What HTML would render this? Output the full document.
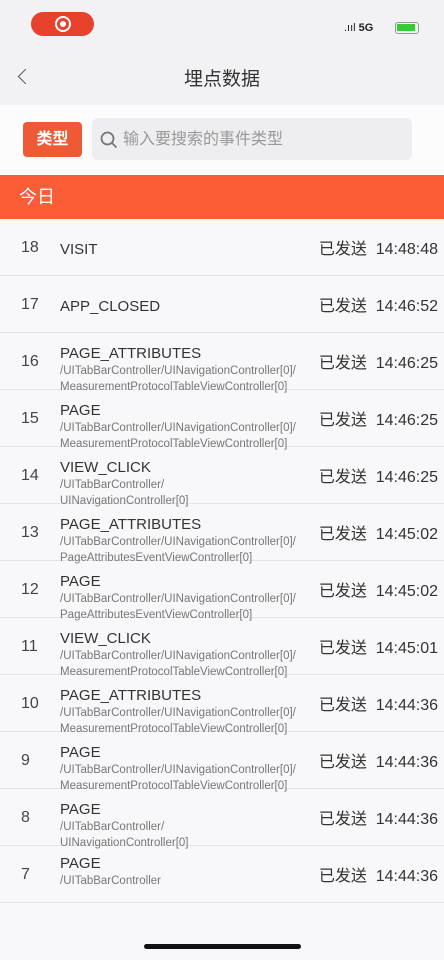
<!DOCTYPE html>
<html><head><meta charset="utf-8"><style>
*{margin:0;padding:0;box-sizing:border-box}
body{width:444px;height:960px;background:#f8f8fa;font-family:"Liberation Sans","Noto Sans CJK SC",sans-serif;position:relative;overflow:hidden;color:#333}
.top{position:absolute;left:0;top:0;width:444px;height:105px;background:#f2f2f5}
.rec{position:absolute;left:31px;top:12px;width:63px;height:24px;background:#e8412c;border-radius:12px}
.rec i{position:absolute;left:24px;top:4px;width:16px;height:16px;border:2px solid #fff;border-radius:50%}
.rec i:after{content:"";position:absolute;left:3px;top:3px;width:6px;height:6px;background:#fff;border-radius:50%}
.title{position:absolute;top:64px;width:444px;text-align:center;font-size:19px;color:#333}
.back{position:absolute;left:20px;top:71px;width:11px;height:11px;border-left:1.5px solid #555;border-bottom:1.5px solid #555;transform:rotate(45deg)}
.sbar{position:absolute;left:0;top:105px;width:444px;height:70px;background:#fcfcfd}
.type{position:absolute;left:23px;top:122px;width:59px;height:35px;background:#ef5a36;border-radius:4px;color:#fff;font-size:16px;font-weight:bold;text-align:center;line-height:35px}
.search{position:absolute;left:92px;top:118px;width:320px;height:42px;background:#eeeef1;border-radius:6px;color:#999;font-size:16px;line-height:44px;padding-left:31px}
.search svg{position:absolute;left:8px;top:13px}
.today{position:absolute;left:0;top:175px;width:444px;height:44px;background:#fb5d37;color:#fff;font-size:18px;line-height:44px;padding-left:19px}
.row{position:absolute;left:0;width:444px;height:57px;border-bottom:1px solid #e4e4e8}
.n{position:absolute;left:21px;width:30px;font-size:16px;color:#444;top:20px;line-height:18px}
.t{position:absolute;right:6px;font-size:16px;color:#333;top:21px;line-height:20px}
.c{position:absolute;left:60px;top:11px;width:250px}
.c.one{top:21px}
.c.two{top:8px}
.c b{display:block;font-weight:normal;font-size:15px;color:#333;line-height:19px}
.c s{display:block;text-decoration:none;font-size:11.5px;color:#777;line-height:16px}
.home{position:absolute;left:144px;top:944px;width:157px;height:5px;background:#111;border-radius:3px}
</style></head><body>
<div class="top"></div>
<div class="rec"><i></i></div>
<div style="position:absolute;left:344px;top:22px;font-size:11px;color:#222">.ııl <b>5G</b></div>
<div style="position:absolute;left:395px;top:22px;width:24px;height:12px;border:1.5px solid #999;border-radius:3px"><div style="margin:1px;width:18px;height:7px;background:#3c3"></div></div>
<div class="back"></div>
<div class="title">埋点数据</div>
<div class="sbar"></div>
<div class="type">类型</div>
<div class="search"><svg width="18" height="18" viewBox="0 0 18 18"><circle cx="7.5" cy="7.5" r="6" fill="none" stroke="#777" stroke-width="1.8"/><path d="M12 12l4.5 4.5" stroke="#777" stroke-width="1.8"/></svg>输入要搜索的事件类型</div>
<div class="today">今日</div>

<div class="row" style="top:219px"><span class="n">18</span><div class="c one"><b>VISIT</b></div><span class="t">已发送&nbsp; 14:48:48</span></div>
<div class="row" style="top:276px"><span class="n">17</span><div class="c one"><b>APP_CLOSED</b></div><span class="t">已发送&nbsp; 14:46:52</span></div>
<div class="row" style="top:333px"><span class="n">16</span><div class="c"><b>PAGE_ATTRIBUTES</b><s>/UITabBarController/UINavigationController[0]/</s><s>MeasurementProtocolTableViewController[0]</s></div><span class="t">已发送&nbsp; 14:46:25</span></div>
<div class="row" style="top:390px"><span class="n">15</span><div class="c"><b>PAGE</b><s>/UITabBarController/UINavigationController[0]/</s><s>MeasurementProtocolTableViewController[0]</s></div><span class="t">已发送&nbsp; 14:46:25</span></div>
<div class="row" style="top:447px"><span class="n">14</span><div class="c"><b>VIEW_CLICK</b><s>/UITabBarController/</s><s>UINavigationController[0]</s></div><span class="t">已发送&nbsp; 14:46:25</span></div>
<div class="row" style="top:504px"><span class="n">13</span><div class="c"><b>PAGE_ATTRIBUTES</b><s>/UITabBarController/UINavigationController[0]/</s><s>PageAttributesEventViewController[0]</s></div><span class="t">已发送&nbsp; 14:45:02</span></div>
<div class="row" style="top:561px"><span class="n">12</span><div class="c"><b>PAGE</b><s>/UITabBarController/UINavigationController[0]/</s><s>PageAttributesEventViewController[0]</s></div><span class="t">已发送&nbsp; 14:45:02</span></div>
<div class="row" style="top:618px"><span class="n">11</span><div class="c"><b>VIEW_CLICK</b><s>/UITabBarController/UINavigationController[0]/</s><s>MeasurementProtocolTableViewController[0]</s></div><span class="t">已发送&nbsp; 14:45:01</span></div>
<div class="row" style="top:675px"><span class="n">10</span><div class="c"><b>PAGE_ATTRIBUTES</b><s>/UITabBarController/UINavigationController[0]/</s><s>MeasurementProtocolTableViewController[0]</s></div><span class="t">已发送&nbsp; 14:44:36</span></div>
<div class="row" style="top:732px"><span class="n">9</span><div class="c"><b>PAGE</b><s>/UITabBarController/UINavigationController[0]/</s><s>MeasurementProtocolTableViewController[0]</s></div><span class="t">已发送&nbsp; 14:44:36</span></div>
<div class="row" style="top:789px"><span class="n">8</span><div class="c"><b>PAGE</b><s>/UITabBarController/</s><s>UINavigationController[0]</s></div><span class="t">已发送&nbsp; 14:44:36</span></div>
<div class="row" style="top:846px"><span class="n">7</span><div class="c two"><b>PAGE</b><s>/UITabBarController</s></div><span class="t">已发送&nbsp; 14:44:36</span></div>
<div class="home"></div>
</body></html>
